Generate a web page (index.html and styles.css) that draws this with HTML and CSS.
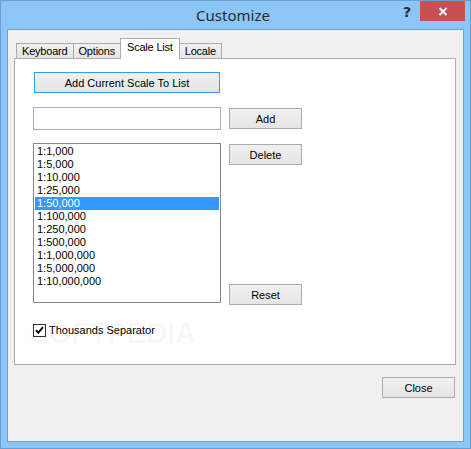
FILE: index.html
```html
<!DOCTYPE html>
<html>
<head>
<meta charset="utf-8">
<link rel="stylesheet" href="styles.css">
</head>
<body>
<div class="window">
  <div class="titlebar">
    <div></div>
    <div class="title">Customize</div>
    <div class="controls">
      <span class="help">?</span>
      <span class="close"><svg width="10" height="9" viewBox="0 0 10 9"><path d="M1.5 1 L8.5 8 M8.5 1 L1.5 8" stroke="#fff" stroke-width="2" fill="none"/></svg></span>
    </div>
  </div>
  <div class="client">
    <div class="tabs">
      <div class="tablist">
        <div class="tab">Keyboard</div>
        <div class="tab">Options</div>
        <div class="tab tab-active">Scale List</div>
        <div class="tab">Locale</div>
      </div>
      <div class="panel">
        <div class="row row-top">
          <button class="btn btn-focus wide">Add Current Scale To List</button>
        </div>
        <div class="row row-input">
          <div class="textbox"></div>
          <button class="btn side">Add</button>
        </div>
        <div class="row row-list">
          <div class="listbox">
            <div class="item">1:1,000</div>
            <div class="item">1:5,000</div>
            <div class="item">1:10,000</div>
            <div class="item">1:25,000</div>
            <div class="item item-selected">1:50,000</div>
            <div class="item">1:100,000</div>
            <div class="item">1:250,000</div>
            <div class="item">1:500,000</div>
            <div class="item">1:1,000,000</div>
            <div class="item">1:5,000,000</div>
            <div class="item">1:10,000,000</div>
          </div>
          <div class="sidecol">
            <button class="btn side">Delete</button>
            <button class="btn side reset">Reset</button>
          </div>
        </div>
        <div class="row row-check">
          <span class="watermark">SOFTPEDIA</span>
          <span class="checkbox"><svg width="13" height="13" viewBox="0 0 13 13"><rect x="0.5" y="0.5" width="12" height="12" fill="#fff" stroke="#333"/><path d="M3 6.2 L5.3 8.8 L10 3.2" stroke="#000" stroke-width="2" fill="none"/></svg></span>
          <span class="checklabel">Thousands Separator</span>
        </div>
      </div>
    </div>
    <div class="footer">
      <button class="btn side">Close</button>
    </div>
  </div>
</div>
</body>
</html>
```

FILE: styles.css
```css
html, body {
  margin: 0;
  padding: 0;
  background: #8bc6f7;
}
.window {
  box-sizing: border-box;
  width: 471px;
  height: 449px;
  border: 1px solid #6a9fcf;
  background: #8bc6f7;
  padding: 0 6px 6px 6px;
  display: flex;
  flex-direction: column;
  font-family: "Liberation Sans", Arial, sans-serif;
  font-size: 11px;
  color: #000;
}
.titlebar {
  height: 28px;
  display: grid;
  grid-template-columns: 1fr auto 1fr;
  margin: 0 -1px 0 -6px;
}
.title {
  font-family: "Noto Sans", "Open Sans", sans-serif;
  font-size: 15px;
  line-height: 28px;
  color: #2a2a2a;
}
.controls {
  display: flex;
  justify-content: flex-end;
  align-items: flex-start;
}
.help {
  width: 26px;
  height: 22px;
  line-height: 22px;
  text-align: center;
  font-family: "DejaVu Sans", sans-serif;
  font-weight: bold;
  font-size: 14px;
  color: #2b2b2b;
}
.close {
  width: 45px;
  height: 20px;
  background: #c75050;
  display: flex;
  align-items: center;
  justify-content: center;
}
.client {
  flex: 1;
  border: 1px solid #6fa2d0;
  background: #f0f0f0;
  display: flex;
  flex-direction: column;
}
.tabs {
  flex: 1;
  display: flex;
  flex-direction: column;
  margin: 8px 7px 0 6px;
}
.tablist {
  display: flex;
  align-items: flex-end;
  padding-left: 2px;
  height: 20px;
}
.tab {
  box-sizing: border-box;
  height: 15px;
  line-height: 14px;
  padding: 0 5px;
  border: 1px solid #acacac;
  border-bottom: none;
  background: linear-gradient(#f0f0f0, #e5e5e5);
  margin-left: -1px;
  letter-spacing: -0.2px;
}
.tab:first-child {
  margin-left: 0;
}
.tab-active {
  height: 21px;
  margin-bottom: -1px;
  padding: 1px 6px 0 6px;
  background: #fff;
  position: relative;
  z-index: 1;
}
.panel {
  flex: 1;
  background: #fff;
  border: 1px solid #acacac;
  padding: 13px 0 0 18px;
  display: flex;
  flex-direction: column;
}
.row {
  display: flex;
  gap: 8px;
  align-items: flex-start;
}
.row-input {
  margin-top: 14px;
}
.row-list {
  margin-top: 13px;
}
.row-check {
  margin-top: 21px;
  gap: 3px;
  align-items: center;
  position: relative;
}
.btn {
  box-sizing: border-box;
  height: 21px;
  padding: 0;
  border: 1px solid #acacac;
  background: linear-gradient(#f0f0f0, #e5e5e5);
  font-family: "Liberation Sans", Arial, sans-serif;
  font-size: 11px;
  color: #000;
}
.btn-focus {
  border-color: #3399ff;
}
.wide {
  width: 186px;
  margin: 0 1px;
}
.side {
  width: 73px;
}
.row-input .side {
  margin-top: 1px;
}
.textbox {
  box-sizing: border-box;
  width: 188px;
  height: 23px;
  border: 1px solid #abadb3;
  background: #fff;
}
.listbox {
  box-sizing: border-box;
  width: 188px;
  height: 160px;
  border: 1px solid #828790;
  background: #fff;
  padding: 1px;
}
.item {
  height: 13px;
  line-height: 13px;
  padding-left: 2px;
  white-space: nowrap;
}
.item-selected {
  background: #3399ff;
  color: #fff;
}
.sidecol {
  height: 160px;
  display: flex;
  flex-direction: column;
  padding-top: 1px;
  box-sizing: border-box;
}
.reset {
  margin-top: auto;
  margin-bottom: -2px;
}
.checkbox {
  width: 13px;
  height: 13px;
  display: block;
  position: relative;
}
.checkbox svg {
  display: block;
}
.checklabel {
  line-height: 13px;
  position: relative;
}
.watermark {
  position: absolute;
  left: -4px;
  top: -8px;
  font-family: "Liberation Sans", Arial, sans-serif;
  font-weight: bold;
  font-size: 30px;
  letter-spacing: -0.5px;
  color: rgba(0, 0, 0, 0.03);
  pointer-events: none;
}
.footer {
  display: flex;
  justify-content: flex-end;
  padding: 12px 8px 43px 0;
}
```
